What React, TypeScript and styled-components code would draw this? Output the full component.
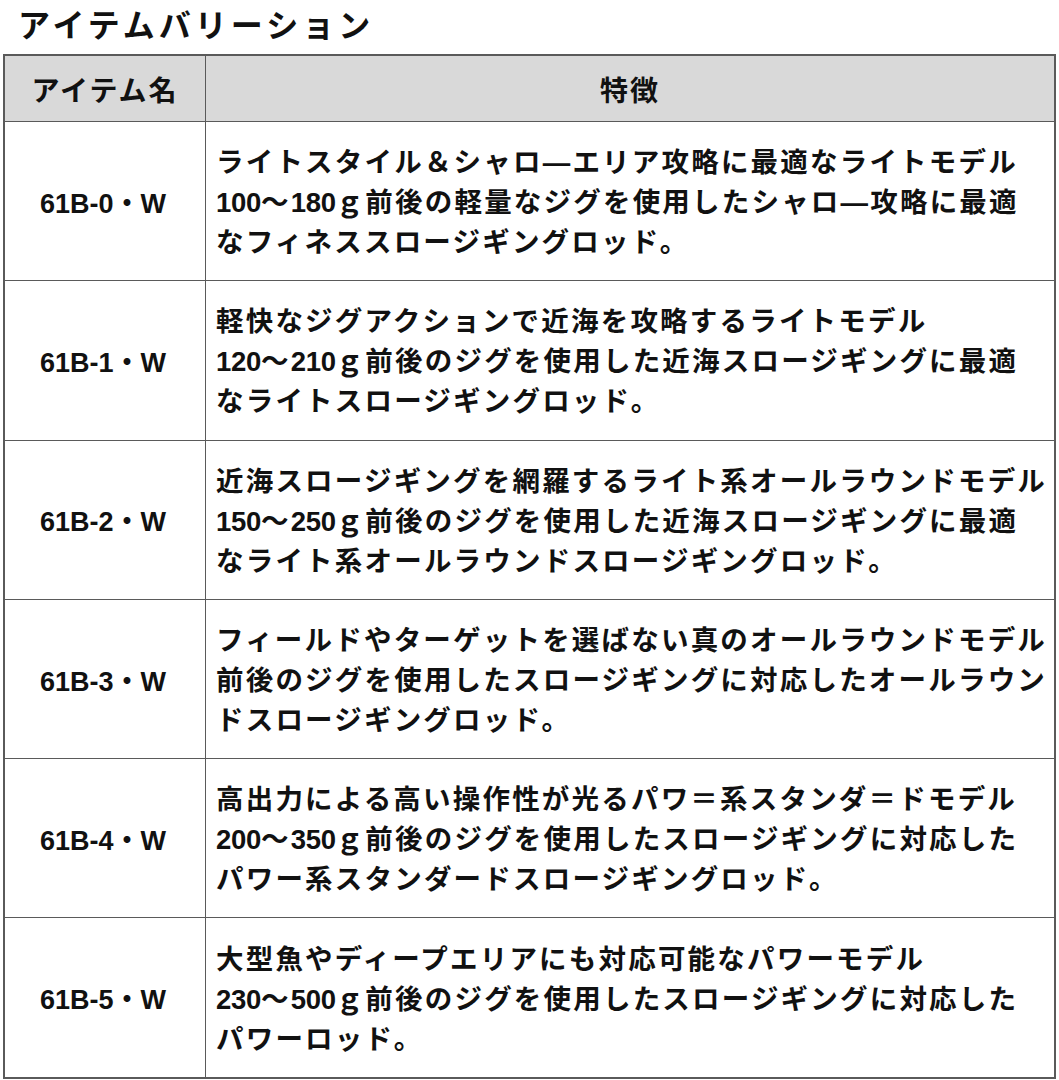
import React from 'react';
import styled, { createGlobalStyle } from 'styled-components';

const GlobalStyle = createGlobalStyle`
  html, body {
    margin: 0;
    padding: 0;
    background: #fff;
  }
  body {
    font-family: "Noto Sans CJK JP", sans-serif;
    color: #111;
  }
`;

const Page = styled.div`
  width: 1059px;
  padding: 2px 0 0 3px;
  box-sizing: border-box;
`;

const Title = styled.h2`
  margin: 0 0 10px 15px;
  font-size: 32px;
  font-weight: 700;
  letter-spacing: 4px;
  line-height: 42px;
`;

const Table = styled.table`
  width: 1053px;
  border-collapse: collapse;
  table-layout: fixed;
  border: 2px solid #5a5a5a;
`;

const HeadCell = styled.th<{ $width?: number }>`
  ${p => (p.$width ? `width: ${p.$width}px;` : '')}
  height: 65px;
  background: #d9d9d9;
  border: 1.5px solid #5a5a5a;
  font-size: 28px;
  font-weight: 700;
  letter-spacing: 2px;
  text-align: center;
  vertical-align: middle;
  padding: 0;
`;

const NameCell = styled.td`
  height: 158.3px;
  border: 1.5px solid #5a5a5a;
  text-align: center;
  vertical-align: middle;
  font-family: "Liberation Sans", "Noto Sans CJK JP", sans-serif;
  font-size: 27px;
  font-weight: 700;
  padding: 0 4px 0 0;
`;

const DescCell = styled.td`
  border: 1.5px solid #5a5a5a;
  vertical-align: middle;
  padding: 4px 0 0 10px;
`;

const Line = styled.div`
  font-family: "Liberation Sans", "Noto Sans CJK JP", sans-serif;
  font-size: 27.5px;
  font-weight: 700;
  letter-spacing: 2.2px;
  line-height: 40px;
  white-space: nowrap;
`;

const Num = styled.span`
  letter-spacing: -0.3px;
`;

// digits are set tight, like the original condensed face
const renderLine = (text: string) =>
  text.split(/(\d+)/).map((part, i) =>
    /^\d+$/.test(part) ? <Num key={i}>{part}</Num> : part
  );

const items = [
  {
    name: '61B-0・W',
    lines: [
      'ライトスタイル＆シャロ—エリア攻略に最適なライトモデル',
      '100～180ｇ前後の軽量なジグを使用したシャロ—攻略に最適',
      'なフィネススロージギングロッド。',
    ],
  },
  {
    name: '61B-1・W',
    lines: [
      '軽快なジグアクションで近海を攻略するライトモデル',
      '120～210ｇ前後のジグを使用した近海スロージギングに最適',
      'なライトスロージギングロッド。',
    ],
  },
  {
    name: '61B-2・W',
    lines: [
      '近海スロージギングを網羅するライト系オールラウンドモデル',
      '150～250ｇ前後のジグを使用した近海スロージギングに最適',
      'なライト系オールラウンドスロージギングロッド。',
    ],
  },
  {
    name: '61B-3・W',
    lines: [
      'フィールドやターゲットを選ばない真のオールラウンドモデル',
      '前後のジグを使用したスロージギングに対応したオールラウン',
      'ドスロージギングロッド。',
    ],
  },
  {
    name: '61B-4・W',
    lines: [
      '高出力による高い操作性が光るパワ＝系スタンダ＝ドモデル',
      '200～350ｇ前後のジグを使用したスロージギングに対応した',
      'パワー系スタンダードスロージギングロッド。',
    ],
  },
  {
    name: '61B-5・W',
    lines: [
      '大型魚やディープエリアにも対応可能なパワーモデル',
      '230～500ｇ前後のジグを使用したスロージギングに対応した',
      'パワーロッド。',
    ],
  },
];

export default function App() {
  return (
    <Page>
      <GlobalStyle />
      <Title>アイテムバリーション</Title>
      <Table>
        <thead>
          <tr>
            <HeadCell $width={200}>アイテム名</HeadCell>
            <HeadCell>特徴</HeadCell>
          </tr>
        </thead>
        <tbody>
          {items.map(item => (
            <tr key={item.name}>
              <NameCell>{item.name}</NameCell>
              <DescCell>
                {item.lines.map(l => (
                  <Line key={l}>{renderLine(l)}</Line>
                ))}
              </DescCell>
            </tr>
          ))}
        </tbody>
      </Table>
    </Page>
  );
}
